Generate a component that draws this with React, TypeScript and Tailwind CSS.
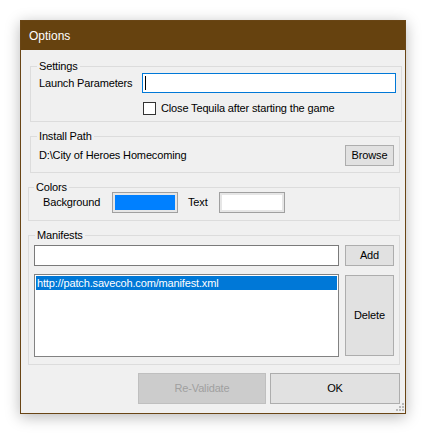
import React from 'react';

const font = "font-['Liberation_Sans',Arial,sans-serif]";

// Caja de grupo estilo WinForms
function Grupo({
  titulo,
  legendClass,
  className,
  children,
}: {
  titulo: string;
  legendClass: string;
  className: string;
  children: React.ReactNode;
}) {
  return (
    <fieldset className={`border border-[#dcdcdc] ${className}`}>
      <legend className={`px-[2px] text-[11px] leading-[14px] ${legendClass}`}>{titulo}</legend>
      {children}
    </fieldset>
  );
}

function Boton({ children, className }: { children: React.ReactNode; className: string }) {
  return (
    <button
      className={`flex items-center justify-center border border-[#adadad] bg-[#e1e1e1] text-[11px] text-black ${className}`}
    >
      {children}
    </button>
  );
}

function Muestra({ color }: { color: string }) {
  return (
    <div className="h-[21px] w-[66px] border border-[#a0a0a0] bg-[#e6e6e6] p-[2px]">
      <div className="h-full w-full" style={{ backgroundColor: color }} />
    </div>
  );
}

export default function App() {
  return (
    <div className={`min-h-screen bg-white p-[20px] text-black tracking-[-0.15px] ${font}`}>
      <div className="relative flex h-[394px] w-[386px] flex-col border border-[#694515] bg-[#f0f0f0] shadow-[0_3px_14px_rgba(0,0,0,0.28)]">
        {/* Barra de título */}
        <div className="flex h-[29px] items-center bg-[#66420f] pl-[8px] text-[12px] tracking-normal text-white">Options</div>

        {/* Settings */}
        <Grupo titulo="Settings" legendClass="ml-[-2px]" className="ml-[9px] mt-[9px] w-[372px] pb-[6px] pl-[8px] pr-[4px]">
          <div className="flex h-[20px] items-center text-[11px]">
            <span className="w-[103px]">Launch Parameters</span>
            <div className="flex h-[20px] w-[254px] items-center border border-[#0078d7] bg-white pl-[2px]">
              <span className="h-[14px] w-[1px] bg-black" />
            </div>
          </div>
          <div className="mt-[9px] flex items-center pl-[104px] text-[11px]">
            <span className="h-[13px] w-[13px] border border-[#333333] bg-white" />
            <span className="ml-[5px] leading-[13px]">Close Tequila after starting the game</span>
          </div>
        </Grupo>

        {/* Install Path */}
        <Grupo titulo="Install Path" legendClass="ml-[-2px]" className="ml-[9px] mt-[7px] w-[370px] pb-[6px] pl-[8px] pr-[5px]">
          <div className="flex items-center justify-between pt-[2px] text-[11px]">
            <span>D:\City of Heroes Homecoming</span>
            <Boton className="h-[21px] w-[49px]">Browse</Boton>
          </div>
        </Grupo>

        {/* Colors */}
        <Grupo titulo="Colors" legendClass="ml-[-9px]" className="ml-[7px] mt-[7px] w-[372px] pb-[7px] pl-[14px]">
          <div className="mt-[-2px] flex items-center text-[11px]">
            <span className="w-[69px]">Background</span>
            <Muestra color="#0080ff" />
            <span className="ml-[10px] w-[31px]">Text</span>
            <Muestra color="#ffffff" />
          </div>
        </Grupo>

        {/* Manifests */}
        <Grupo titulo="Manifests" legendClass="ml-[1px]" className="ml-[7px] mt-[7px] w-[372px] pb-[7px] pl-[5px] pr-[5px]">
          <div className="mt-[3px] flex items-center justify-between">
            <div className="h-[21px] w-[305px] border border-[#7a7a7a] bg-white" />
            <Boton className="h-[21px] w-[49px]">Add</Boton>
          </div>
          <div className="mt-[8px] flex items-start justify-between">
            <div className="h-[83px] w-[305px] border border-[#828282] bg-white p-[1px]">
              <div className="h-[14px] bg-[#0078d7] pl-[1px] text-[11px] leading-[14px] text-white">
                http://patch.savecoh.com/manifest.xml
              </div>
            </div>
            <Boton className="mt-[1px] h-[81px] w-[49px]">Delete</Boton>
          </div>
        </Grupo>

        {/* Botones inferiores */}
        <div className="mt-[8px] flex justify-end gap-[4px] pr-[5px]">
          <button className="flex h-[31px] w-[128px] items-center justify-center border border-[#bfbfbf] bg-[#cccccc] text-[11px] text-[#a0a0a0]">
            Re-Validate
          </button>
          <Boton className="h-[31px] w-[130px]">OK</Boton>
        </div>

        {/* Agarre de redimensionado */}
        <svg className="absolute bottom-[2px] right-[1px]" width="9" height="9" viewBox="0 0 9 9">
          <rect x="7" y="1" width="2" height="2" fill="#b8b8b8" />
          <rect x="4" y="4" width="2" height="2" fill="#b8b8b8" />
          <rect x="7" y="4" width="2" height="2" fill="#b8b8b8" />
          <rect x="1" y="7" width="2" height="2" fill="#b8b8b8" />
          <rect x="4" y="7" width="2" height="2" fill="#b8b8b8" />
          <rect x="7" y="7" width="2" height="2" fill="#b8b8b8" />
        </svg>
      </div>
    </div>
  );
}
